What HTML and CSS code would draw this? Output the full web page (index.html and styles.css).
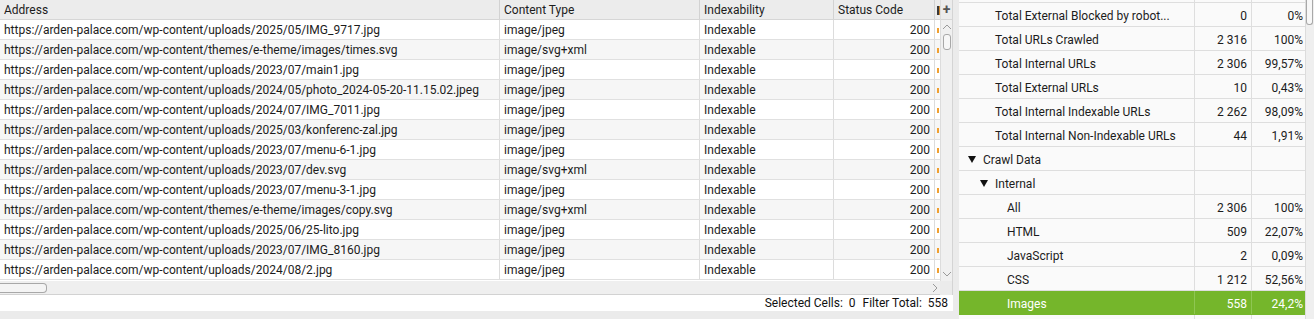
FILE: index.html
```html
<!doctype html>
<html>
<head>
<meta charset="utf-8">
<title>Crawl - Images</title>
<link rel="stylesheet" href="styles.css">
</head>
<body>
<div class="app">
	<div class="left">
		<div class="tablewrap">
			<div class="grid">
				<div class="row head">
					<div class="c">Address</div>
					<div class="c">Content Type</div>
					<div class="c">Indexability</div>
					<div class="c">Status Code</div>
					<div class="c cut"><i class="s"></i></div>
				</div>
				<div class="row"><div class="c">https://arden-palace.com/wp-content/uploads/2025/05/IMG_9717.jpg</div><div class="c">image/jpeg</div><div class="c">Indexable</div><div class="c num">200</div><div class="c cut"><i></i></div></div>
				<div class="row"><div class="c">https://arden-palace.com/wp-content/themes/e-theme/images/times.svg</div><div class="c">image/svg+xml</div><div class="c">Indexable</div><div class="c num">200</div><div class="c cut"><i></i></div></div>
				<div class="row"><div class="c">https://arden-palace.com/wp-content/uploads/2023/07/main1.jpg</div><div class="c">image/jpeg</div><div class="c">Indexable</div><div class="c num">200</div><div class="c cut"><i></i></div></div>
				<div class="row"><div class="c">https://arden-palace.com/wp-content/uploads/2024/05/photo_2024-05-20-11.15.02.jpeg</div><div class="c">image/jpeg</div><div class="c">Indexable</div><div class="c num">200</div><div class="c cut"><i></i></div></div>
				<div class="row"><div class="c">https://arden-palace.com/wp-content/uploads/2024/07/IMG_7011.jpg</div><div class="c">image/jpeg</div><div class="c">Indexable</div><div class="c num">200</div><div class="c cut"><i></i></div></div>
				<div class="row"><div class="c">https://arden-palace.com/wp-content/uploads/2025/03/konferenc-zal.jpg</div><div class="c">image/jpeg</div><div class="c">Indexable</div><div class="c num">200</div><div class="c cut"><i></i></div></div>
				<div class="row"><div class="c">https://arden-palace.com/wp-content/uploads/2023/07/menu-6-1.jpg</div><div class="c">image/jpeg</div><div class="c">Indexable</div><div class="c num">200</div><div class="c cut"><i></i></div></div>
				<div class="row"><div class="c">https://arden-palace.com/wp-content/uploads/2023/07/dev.svg</div><div class="c">image/svg+xml</div><div class="c">Indexable</div><div class="c num">200</div><div class="c cut"><i></i></div></div>
				<div class="row"><div class="c">https://arden-palace.com/wp-content/uploads/2023/07/menu-3-1.jpg</div><div class="c">image/jpeg</div><div class="c">Indexable</div><div class="c num">200</div><div class="c cut"><i></i></div></div>
				<div class="row"><div class="c">https://arden-palace.com/wp-content/themes/e-theme/images/copy.svg</div><div class="c">image/svg+xml</div><div class="c">Indexable</div><div class="c num">200</div><div class="c cut"><i></i></div></div>
				<div class="row"><div class="c">https://arden-palace.com/wp-content/uploads/2025/06/25-lito.jpg</div><div class="c">image/jpeg</div><div class="c">Indexable</div><div class="c num">200</div><div class="c cut"><i></i></div></div>
				<div class="row"><div class="c">https://arden-palace.com/wp-content/uploads/2023/07/IMG_8160.jpg</div><div class="c">image/jpeg</div><div class="c">Indexable</div><div class="c num">200</div><div class="c cut"><i></i></div></div>
				<div class="row"><div class="c">https://arden-palace.com/wp-content/uploads/2024/08/2.jpg</div><div class="c">image/jpeg</div><div class="c">Indexable</div><div class="c num">200</div><div class="c cut"><i></i></div></div>
			</div>
			<div class="vbar">
				<div class="plus">+</div>
				<div class="vtrack">
					<svg class="arr" width="10" height="6" viewBox="0 0 10 6"><path d="M1 5L5 1L9 5" fill="none" stroke="#9a9a9a" stroke-width="1"/></svg>
					<div class="vthumb"></div>
					<div class="fill"></div>
					<svg class="arr" width="10" height="6" viewBox="0 0 10 6"><path d="M1 1L5 5L9 1" fill="none" stroke="#9a9a9a" stroke-width="1"/></svg>
				</div>
			</div>
		</div>
		<div class="hbar">
			<div class="hthumb"></div>
			<svg class="harr" width="6" height="10" viewBox="0 0 6 10"><path d="M1 1L5 5L1 9" fill="none" stroke="#9a9a9a" stroke-width="1"/></svg>
			<div class="corner"></div>
		</div>
		<div class="status">
			<span>Selected Cells:&nbsp; 0</span>
			<span>Filter Total:&nbsp; 558</span>
		</div>
	</div>
	<div class="split"></div>
	<div class="right">
		<div class="tree">
			<div class="trow l1"><div class="lab"></div><div class="n"></div><div class="p"></div></div>
			<div class="trow l1"><div class="lab">Total External Blocked by robot...</div><div class="n">0</div><div class="p">0%</div></div>
			<div class="trow l1"><div class="lab">Total URLs Crawled</div><div class="n">2 316</div><div class="p">100%</div></div>
			<div class="trow l1"><div class="lab">Total Internal URLs</div><div class="n">2 306</div><div class="p">99,57%</div></div>
			<div class="trow l1"><div class="lab">Total External URLs</div><div class="n">10</div><div class="p">0,43%</div></div>
			<div class="trow l1"><div class="lab">Total Internal Indexable URLs</div><div class="n">2 262</div><div class="p">98,09%</div></div>
			<div class="trow l1"><div class="lab">Total Internal Non-Indexable URLs</div><div class="n">44</div><div class="p">1,91%</div></div>
			<div class="trow l0"><div class="lab"><b class="tri"></b>Crawl Data</div><div class="n"></div><div class="p"></div></div>
			<div class="trow l1 node"><div class="lab"><b class="tri"></b>Internal</div><div class="n"></div><div class="p"></div></div>
			<div class="trow l2"><div class="lab">All</div><div class="n">2 306</div><div class="p">100%</div></div>
			<div class="trow l2"><div class="lab">HTML</div><div class="n">509</div><div class="p">22,07%</div></div>
			<div class="trow l2"><div class="lab">JavaScript</div><div class="n">2</div><div class="p">0,09%</div></div>
			<div class="trow l2"><div class="lab">CSS</div><div class="n">1 212</div><div class="p">52,56%</div></div>
			<div class="trow l2 sel"><div class="lab">Images</div><div class="n">558</div><div class="p">24,2%</div></div>
			<div class="trow l2"><div class="lab"></div><div class="n"></div><div class="p"></div></div>
		</div>
		<div class="rbar"><div class="rthumb"></div></div>
	</div>
</div>
</body>
</html>
```

FILE: styles.css
```css
*{padding:0; margin:0; box-sizing:border-box;}
body{overflow:hidden; background:#ebebeb; font-family:Roboto, "Liberation Sans", sans-serif; font-size:12px; color:#1c1c1c;}
.app{display:flex; width:1314px; height:319px;}

/* left table */
.left{width:953px; display:flex; flex-direction:column;}
.tablewrap{display:flex; height:281px; background:#fff; border-right:1px solid #d4d4d4;}
.grid{width:940px; overflow:hidden;}
.row{display:grid; grid-template-columns:500px 200px 134px 101px 5px; height:20px; border-bottom:1px solid #e0e0e0;}
.row:nth-child(odd){background:#f6f6f6;}
.row.head{background:#ececec; border-bottom:1px solid #d6d6d6;}
.c{padding:0 4px; line-height:21px; white-space:nowrap; overflow:hidden; border-right:1px solid #dcdcdc;}
.head .c{border-right-color:#d2d2d2;}
.num{text-align:right;}
.cut{padding:0 0 0 2px; border-right:none;}
.cut i{display:block; width:2px; height:5px; margin-top:8px; background:#f0a030;}
.cut i.s{width:3px; height:9px; margin-top:6px; background:#3a3a3a; border-right:1px solid #d08a30;}

.vbar{width:12px; display:flex; flex-direction:column; background:#f0f0f0; border-left:1px solid #dcdcdc;}
.plus{height:20px; line-height:18px; text-align:center; font-weight:bold; font-size:14px; color:#555; background:#ececec; border-bottom:1px solid #d6d6d6;}
.vtrack{flex:1; display:flex; flex-direction:column; align-items:center; padding:4px 0;}
.vthumb{width:8px; height:16px; margin-top:4px; border:1px solid #a8a8a8; border-radius:3px; background:#f7f7f7;}
.fill{flex:1;}

.hbar{height:14px; display:flex; align-items:center; background:#efefef; border-bottom:1px solid #d2d2d2; border-right:1px solid #d4d4d4;}
.hthumb{width:47px; height:10px; border:1px solid #a8a8a8; border-left:none; border-radius:0 4px 4px 0; background:#f4f4f4;}
.harr{margin-left:auto; margin-right:2px;}
.corner{width:12px; height:14px; background:#ebebeb;}

.status{height:16px; background:#fff; display:flex; justify-content:flex-end; gap:7px; padding-right:5px; line-height:17px; color:#111;}

.split{width:6px;}

/* right tree */
.right{flex:1; display:flex; overflow:hidden; background:#fafafa;}
.tree{flex:1; margin-top:-21px;}
.trow{display:grid; grid-template-columns:236px 57px 53px; height:24px; border-bottom:1px solid #dedede;}
.trow div{line-height:27px; white-space:nowrap; overflow:hidden;}
.lab{border-right:1px solid #dedede; display:flex; align-items:center; padding-top:3px;}
.n{border-right:1px solid #dedede; text-align:right; padding-right:4px;}
.p{text-align:right; padding-right:2px;}
.l0 .lab{padding-left:9px;}
.l1 .lab{padding-left:36px;}
.l1.node .lab{padding-left:21px;}
.l2 .lab{padding-left:48px;}
.tri{display:inline-block; width:0; height:0; border-left:4px solid transparent; border-right:4px solid transparent; border-top:7px solid #111; margin-right:7px; margin-top:-2px;}
.sel{background:#75b62b; color:#fff; border-bottom-color:#75b62b;}
.sel .lab, .sel .n{border-right-color:#8fc653;}

.rbar{width:9px; background:#efefef; border-left:1px solid #dcdcdc;}
.rthumb{width:7px; height:25px; border:1px solid #a8a8a8; border-top:none; border-radius:0 0 3px 3px; background:#f7f7f7;}
```
